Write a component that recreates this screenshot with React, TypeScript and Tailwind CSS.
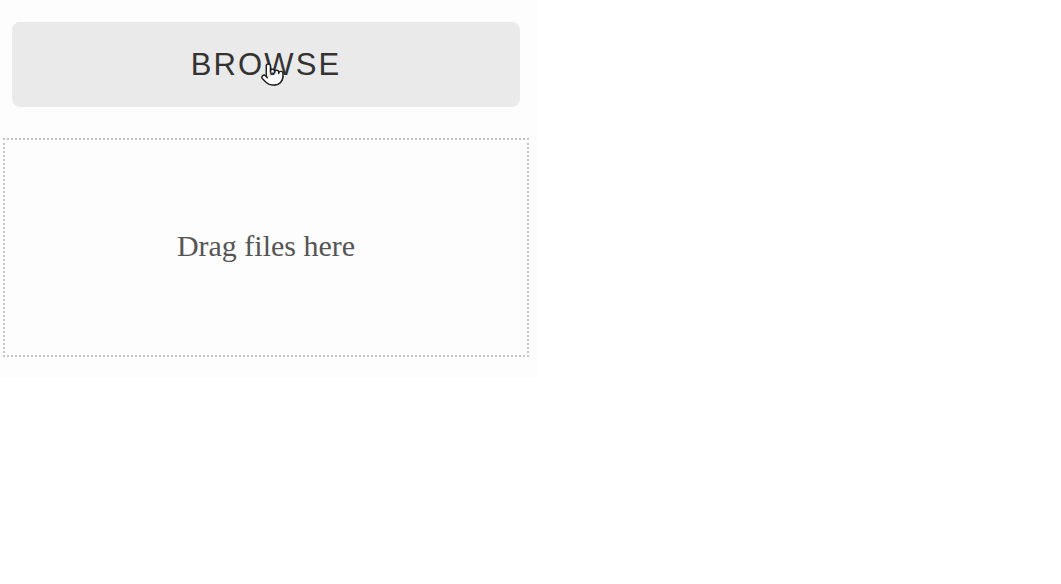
import { Pointer } from "lucide-react";

const App = () => {
  return (
    <div className="min-h-screen w-full bg-white">
      {/* upload panel */}
      <div className="w-[538px] h-[378px] bg-[#fdfdfd] pt-[22px] pl-[3px]">
        <div className="pl-[9px]">
          <button className="relative w-[508px] h-[85px] rounded-[8px] bg-[#eaeaea] flex items-center justify-center">
            <span
              className="text-[31px] tracking-[2.1px] text-[#333] leading-none"
              style={{ fontFamily: '"Liberation Sans", Arial, sans-serif' }}
            >
              BROWSE
            </span>
            {/* mouse cursor */}
            <Pointer
              className="absolute left-[248px] top-[40px]"
              size={25}
              fill="#fff"
              stroke="#222"
              strokeWidth={1.4}
            />
          </button>
        </div>

        {/* drop zone */}
        <div className="mt-[31px] w-[526px] h-[219px] pb-[3px] border-2 border-dotted border-[#c4c4c4] flex items-center justify-center">
          <span
            className="text-[30px] text-[#555] leading-none"
            style={{ fontFamily: '"Liberation Serif", "Times New Roman", serif' }}
          >
            Drag files here
          </span>
        </div>
      </div>
    </div>
  );
};

export default App;
